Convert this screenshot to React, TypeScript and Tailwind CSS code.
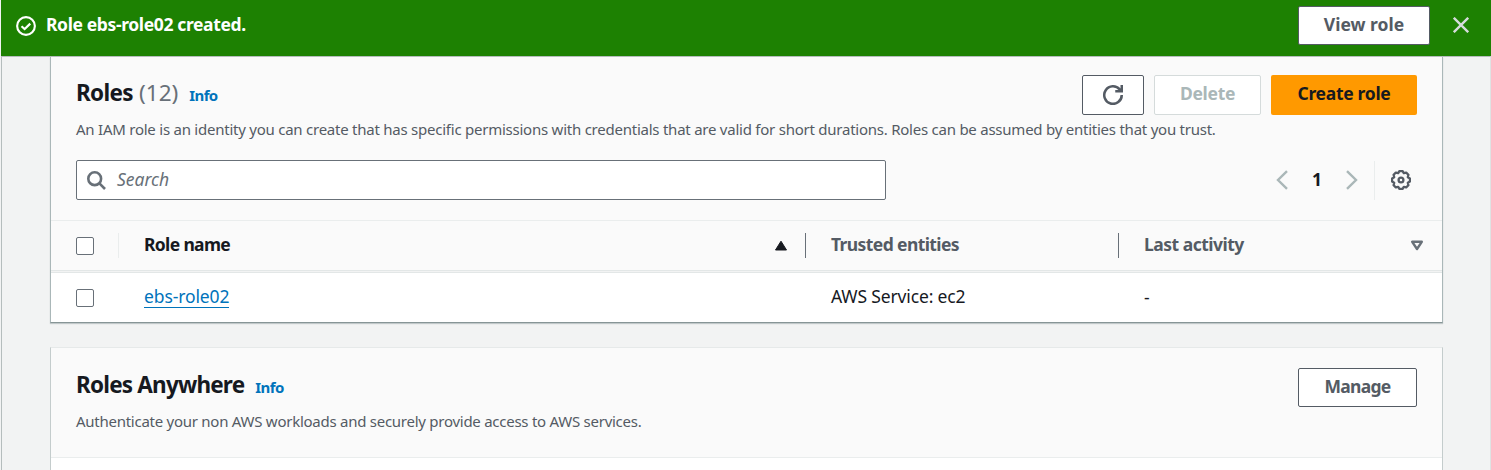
import React from "react";

const Info = () => (
  <a className="ml-[11px] text-[15px] font-bold leading-5 tracking-[-0.6px] text-[#0073bb]">Info</a>
);

const button =
  "flex items-center justify-center rounded-[2px] border border-[#545b64] bg-white pb-[2px] text-[17.5px] font-bold text-[#545b64]";

const Checkbox = () => <span className="block h-[18px] w-[18px] rounded-[2px] border border-[#687078] bg-white" />;

export default function App() {
  return (
    <div
      className="flex h-[470px] w-[1491px] flex-col overflow-hidden bg-[#f2f3f3] text-[17.5px] text-[#16191f]"
      style={{ fontFamily: '"Noto Sans", "Open Sans", sans-serif' }}
    >
      <header className="ml-px flex h-14 shrink-0 items-start bg-[#1d8102] pl-[15px] pr-[22px] pt-[6px] text-white">
        <svg className="mt-[10px] h-5 w-5" viewBox="0 0 16 16" fill="none" stroke="currentColor" strokeWidth="1.7">
          <circle cx="8" cy="8" r="7.1" />
          <path d="M4.4 8.2l2.5 2.3 4.5-4.4" />
        </svg>
        <span className="ml-[10px] mt-[6px] whitespace-nowrap font-bold leading-6 tracking-[-0.37px]">
          Role ebs-role02 created.
        </span>
        <button className={`${button} ml-auto h-[39px] w-[132px]`}>View role</button>
        <svg className="ml-[23px] mt-[11px] h-4 w-4" viewBox="0 0 16 16" fill="none" stroke="#d5dbdb" strokeWidth="2.4">
          <path d="M.8.8l14.4 14.4M15.2.8L.8 15.2" />
        </svg>
      </header>
      <div className="ml-px flex flex-1 flex-col border-l border-r border-t border-[#b5bdbd] border-r-[#dfe3e3] pl-12">
        <section className="flex h-[266px] w-[1393px] shrink-0 flex-col border-x border-b border-[#aab7b8] border-b-[#879596] bg-white shadow-[0_1px_1px_0_rgba(0,28,36,0.2)]">
          <div className="flex h-[164px] flex-col border-b border-[#eaeded] bg-[#fafafa] px-[25px] pt-[18px]">
            <div className="flex h-10 items-start">
              <h1 className="flex items-baseline whitespace-nowrap pt-[3px] text-[22.5px] leading-[30px]">
                <span className="font-bold tracking-[-0.65px]">Roles</span>
                <span className="ml-[6px] text-[#687078]">(12)</span>
                <Info />
              </h1>
              <div className="ml-auto flex gap-[10px]">
                <button className={`${button} h-10 w-[62px]`}>
                  <svg className="mt-[2px] h-5 w-5" viewBox="0 0 16 16" fill="none" stroke="currentColor" strokeWidth="2">
                    <path d="M15 8a7 7 0 1 1-1.6-4.4L14.6 4.8M9.8 5H15V0" />
                  </svg>
                </button>
                <button className="h-10 w-[107px] rounded-[2px] border border-[#d5dbdb] bg-white pb-[4px] font-bold tracking-[-0.3px] text-[#aab7b8]">
                  Delete
                </button>
                <button className="h-10 w-[146px] rounded-[2px] bg-[#ff9900] pb-[4px] font-bold tracking-[-0.3px]">
                  Create role
                </button>
              </div>
            </div>
            <p className="mt-[4px] whitespace-nowrap text-[15px] leading-5 tracking-[-0.24px] text-[#545b64]">
              An IAM role is an identity you can create that has specific permissions with credentials that are valid for
              short durations. Roles can be assumed by entities that you trust.
            </p>
            <div className="mt-[21px] flex h-10 items-center">
              <div className="flex h-10 w-[810px] items-center rounded-[2px] border border-[#687078] bg-white pl-[10px] text-[#687078]">
                <svg className="h-[19px] w-[19px]" viewBox="0 0 19 19" fill="none" stroke="currentColor" strokeWidth="2.6">
                  <circle cx="7.7" cy="7.7" r="6.4" />
                  <path d="M12.2 12.2l5.8 5.8" />
                </svg>
                <span className="ml-[11px] pb-[2px] italic">Search</span>
              </div>
              <div className="ml-auto flex items-center">
                <svg className="h-5 w-3" viewBox="0 0 12 20" fill="none" stroke="#aab7b8" strokeWidth="2.4">
                  <path d="M11 1.2L2 10l9 8.8" />
                </svg>
                <span className="w-[58px] pb-px text-center font-bold">1</span>
                <svg className="h-5 w-3" viewBox="0 0 12 20" fill="none" stroke="#aab7b8" strokeWidth="2.4">
                  <path d="M1 1.2l9 8.8-9 8.8" />
                </svg>
                <span className="ml-4 h-[39px] w-px bg-[#eaeded]" />
                <svg className="ml-4 mr-[6px] h-5 w-5" viewBox="0 0 20 20" fill="none" stroke="#545b64" strokeWidth="2.3" strokeLinejoin="round">
                  <path d="M18.9 8.4V11.6L16.8 12.8L17.4 15.2L15.2 17.4L12.8 16.8L11.6 18.9H8.4L7.2 16.8L4.8 17.4L2.6 15.2L3.2 12.8L1.1 11.6V8.4L3.2 7.2L2.6 4.8L4.8 2.6L7.2 3.2L8.4 1.1H11.6L12.8 3.2L15.2 2.6L17.4 4.8L16.8 7.2Z" />
                  <circle cx="10" cy="10" r="2.4" />
                </svg>
              </div>
            </div>
          </div>
          <div className="flex h-[49px] shrink-0 items-center bg-[#fafafa] pl-[25px] font-bold">
            <Checkbox />
            <span className="ml-6 h-[25px] w-px bg-[#eaeded]" />
            <span className="ml-[25px] pb-[3px] tracking-[-0.65px]">Role name</span>
            <svg className="ml-auto h-[11px] w-[14px]" viewBox="0 0 14 11">
              <path d="M7 1.2L12.5 10h-11z" fill="#16191f" stroke="#16191f" strokeLinejoin="round" />
            </svg>
            <span className="ml-[17px] h-[25px] w-px bg-[#687078]" />
            <span className="ml-[25px] w-[287px] pb-[3px] tracking-[-0.6px] text-[#545b64]">Trusted entities</span>
            <span className="h-[25px] w-px bg-[#687078]" />
            <span className="ml-[25px] w-[266px] pb-[3px] tracking-[-0.5px] text-[#545b64]">Last activity</span>
            <svg className="mr-[18px] h-[11px] w-[14px]" viewBox="0 0 14 11" fill="none">
              <path d="M2.2 1.8h9.6L7 9z" stroke="#687078" strokeWidth="2.4" strokeLinejoin="round" />
            </svg>
          </div>
          <div className="h-[3px] shrink-0 border-y border-[#e3e7e7] bg-[#f2f3f3]" />
          <div className="flex h-[49px] shrink-0 items-center pl-[25px]">
            <Checkbox />
            <a className="ml-[50px] mr-auto border-b border-[#0073bb] pb-px leading-[19px] tracking-[-0.12px] text-[#0073bb]">
              ebs-role02
            </a>
            <span className="w-[313px] pb-[2px] tracking-[-0.15px]">AWS Service: ec2</span>
            <span className="w-[298px]">-</span>
          </div>
        </section>
        <section className="mt-6 flex h-[130px] w-[1393px] shrink-0 flex-col border border-b-0 border-[#c4cccc] border-t-[#e6e9e9] bg-white">
          <div className="flex h-[110px] items-start border-b border-[#eaeded] bg-[#fafafa] px-[25px] pt-5">
            <div className="whitespace-nowrap">
              <h2 className="flex items-baseline pt-[2px] text-[22.5px] leading-[30px]">
                <span className="font-bold tracking-[-0.8px]">Roles Anywhere</span>
                <Info />
              </h2>
              <p className="mt-[11px] text-[15px] leading-5 tracking-[-0.26px] text-[#545b64]">
                Authenticate your non AWS workloads and securely provide access to AWS services.
              </p>
            </div>
            <button className={`${button} ml-auto h-[39px] w-[119px] tracking-[-0.7px]`}>Manage</button>
          </div>
        </section>
      </div>
    </div>
  );
}
